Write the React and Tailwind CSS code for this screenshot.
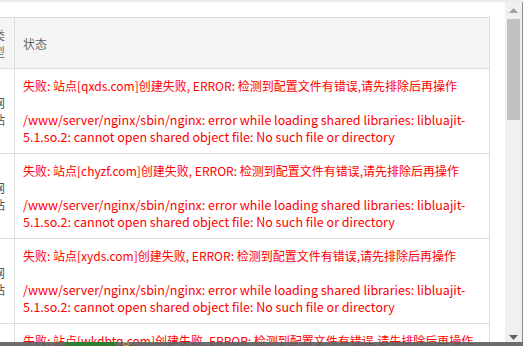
const rows = [
  "qxds.com",
  "chyzf.com",
  "xyds.com",
  "wkdbtq.com",
];

function ScrollBar() {
  return (
    <div className="w-[18px] flex flex-col bg-[#f0f0f0] border-r border-[#8a8a8a]">
      <div className="h-[17px] flex items-center justify-center">
        <svg width="9" height="5" viewBox="0 0 9 5">
          <path d="M4.5 0 L9 5 L0 5 Z" fill="#a3a3a3" />
        </svg>
      </div>
      <div className="mx-[2px] h-[101px] bg-[#c1c1c1]" />
      <div className="flex-1" />
      <div className="h-[17px] flex items-center justify-center">
        <svg width="9" height="5" viewBox="0 0 9 5">
          <path d="M0 0 L9 0 L4.5 5 Z" fill="#606060" />
        </svg>
      </div>
    </div>
  );
}

export default function App() {
  return (
    <div
      className="w-[523px] h-[346px] relative overflow-hidden bg-white text-[12px] leading-[17px]"
      style={{ fontFamily: '"Noto Sans CJK SC", "Noto Sans", sans-serif' }}
    >
      <div className="h-[2px] bg-[#ececec]" />
      <div className="flex h-[344px]">
        <div className="flex-1 overflow-hidden pt-[15px]">
          <table className="table-fixed border-collapse ml-[-16px] w-[506px]">
            <colgroup>
              <col className="w-[30px]" />
              <col />
            </colgroup>
            <thead>
              <tr className="bg-[#f5f5f5]">
                <th className="border border-[#dddddd] px-2 py-2 font-normal text-left text-[#666] align-middle break-all">
                  类型
                </th>
                <th className="border border-[#dddddd] px-2 py-2 font-normal text-left text-[#666] align-middle">
                  状态
                </th>
              </tr>
            </thead>
            <tbody>
              {rows.map((d) => (
                <tr key={d}>
                  <td className="border border-[#dddddd] px-2 py-2 text-[#555] align-middle break-all">
                    网站
                  </td>
                  <td className="border border-[#dddddd] px-2 py-2 text-[#ff0000] align-middle">
                    失败: 站点[{d}]创建失败, ERROR: 检测到配置文件有错误,请先排除后再操作
                    <br />
                    <br />
                    <span className="text-[12.5px]">
                      /www/server/nginx/sbin/nginx: error while loading shared libraries: libluajit-<wbr />5.1.so.2: cannot open shared object file: No such file or directory
                    </span>
                  </td>
                </tr>
              ))}
            </tbody>
          </table>
        </div>
        <ScrollBar />
      </div>
      {/* taskbar edge peeking in at the bottom */}
      <div className="absolute left-0 right-0 bottom-0 h-[4px] bg-[#5e5e5e]/90 flex">
        <div className="w-[65px]" />
        <div className="w-[50px] bg-[#2e7d32]" />
        <div className="w-[8px]" />
        <div className="w-[6px] rounded-full border border-[#d9a441]" />
      </div>
    </div>
  );
}
